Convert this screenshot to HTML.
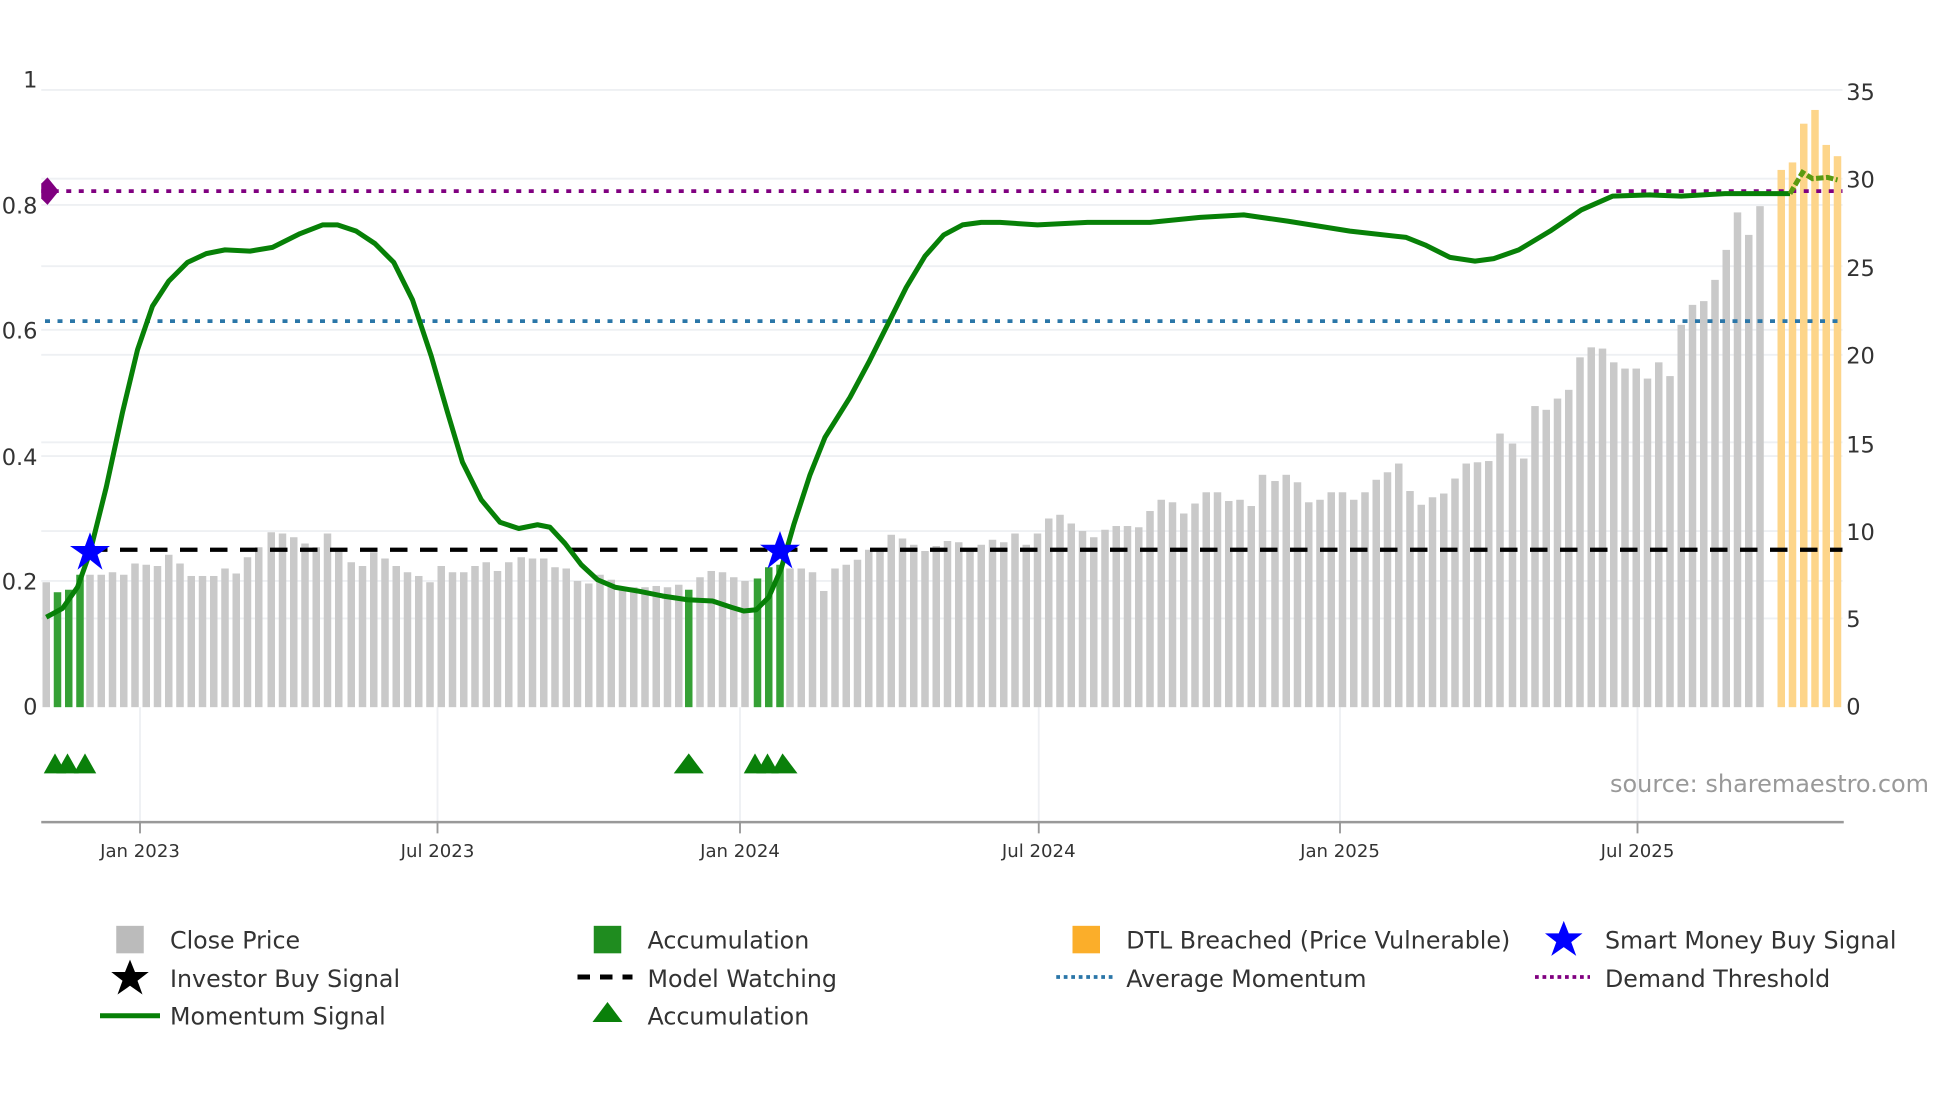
<!DOCTYPE html>
<html><head><meta charset="utf-8"><style>
html,body{margin:0;padding:0;background:#fff;width:1960px;height:1102px;overflow:hidden}
svg{display:block}
text{font-family:"DejaVu Sans","Liberation Sans",sans-serif}
</style></head><body>
<svg width="1960" height="1102" viewBox="0 0 1568 882" preserveAspectRatio="none" xmlns="http://www.w3.org/2000/svg">
<g stroke="#eef0f3" stroke-width="1.5">
<line x1="33" y1="72" x2="1474" y2="72"/><line x1="33" y1="143" x2="1474" y2="143"/><line x1="33" y1="213" x2="1474" y2="213"/><line x1="33" y1="284" x2="1474" y2="284"/><line x1="33" y1="354" x2="1474" y2="354"/><line x1="33" y1="425" x2="1474" y2="425"/><line x1="33" y1="495" x2="1474" y2="495"/>
<line x1="33" y1="164" x2="1474" y2="164"/><line x1="33" y1="264" x2="1474" y2="264"/><line x1="33" y1="365" x2="1474" y2="365"/><line x1="33" y1="465" x2="1474" y2="465"/>
<line x1="112" y1="566" x2="112" y2="658"/><line x1="350" y1="566" x2="350" y2="658"/><line x1="592" y1="566" x2="592" y2="658"/><line x1="831" y1="566" x2="831" y2="658"/><line x1="1072" y1="566" x2="1072" y2="658"/><line x1="1310" y1="566" x2="1310" y2="658"/>
</g>
<g fill="#c9c9c9">
<rect x="34" y="466" width="6" height="100"/>
<rect x="69" y="460" width="6" height="106"/><rect x="78" y="460" width="6" height="106"/><rect x="87" y="458" width="6" height="108"/><rect x="96" y="460" width="6" height="106"/><rect x="105" y="451" width="6" height="115"/><rect x="114" y="452" width="6" height="114"/><rect x="123" y="453" width="6" height="113"/><rect x="132" y="444" width="6" height="122"/><rect x="141" y="451" width="6" height="115"/><rect x="150" y="461" width="6" height="105"/><rect x="159" y="461" width="6" height="105"/><rect x="168" y="461" width="6" height="105"/><rect x="177" y="455" width="6" height="111"/><rect x="186" y="459" width="6" height="107"/><rect x="195" y="446" width="6" height="120"/><rect x="204" y="438" width="6" height="128"/><rect x="214" y="426" width="6" height="140"/><rect x="223" y="427" width="6" height="139"/><rect x="232" y="430" width="6" height="136"/><rect x="241" y="435" width="6" height="131"/><rect x="250" y="438" width="6" height="128"/><rect x="259" y="427" width="6" height="139"/><rect x="268" y="440" width="6" height="126"/><rect x="278" y="450" width="6" height="116"/><rect x="287" y="453" width="6" height="113"/><rect x="296" y="442" width="6" height="124"/><rect x="305" y="447" width="6" height="119"/><rect x="314" y="453" width="6" height="113"/><rect x="323" y="458" width="6" height="108"/><rect x="332" y="461" width="6" height="105"/><rect x="341" y="466" width="6" height="100"/><rect x="350" y="453" width="6" height="113"/><rect x="359" y="458" width="6" height="108"/><rect x="368" y="458" width="6" height="108"/><rect x="377" y="453" width="6" height="113"/><rect x="386" y="450" width="6" height="116"/><rect x="395" y="457" width="6" height="109"/><rect x="404" y="450" width="6" height="116"/><rect x="414" y="446" width="6" height="120"/><rect x="423" y="447" width="6" height="119"/><rect x="432" y="447" width="6" height="119"/><rect x="441" y="454" width="6" height="112"/><rect x="450" y="455" width="6" height="111"/><rect x="459" y="465" width="6" height="101"/><rect x="468" y="467" width="6" height="99"/><rect x="477" y="460" width="6" height="106"/><rect x="486" y="464" width="6" height="102"/><rect x="495" y="470" width="6" height="96"/><rect x="504" y="470" width="6" height="96"/><rect x="513" y="470" width="6" height="96"/><rect x="522" y="469" width="6" height="97"/><rect x="531" y="470" width="6" height="96"/><rect x="540" y="468" width="6" height="98"/>
<rect x="557" y="462" width="6" height="104"/><rect x="566" y="457" width="6" height="109"/><rect x="575" y="458" width="6" height="108"/><rect x="584" y="462" width="6" height="104"/><rect x="593" y="465" width="6" height="101"/>
<rect x="629" y="455" width="6" height="111"/><rect x="638" y="455" width="6" height="111"/><rect x="647" y="458" width="6" height="108"/><rect x="656" y="473" width="6" height="93"/><rect x="665" y="455" width="6" height="111"/><rect x="674" y="452" width="6" height="114"/><rect x="683" y="448" width="6" height="118"/><rect x="692" y="440" width="6" height="126"/><rect x="701" y="440" width="6" height="126"/><rect x="710" y="428" width="6" height="138"/><rect x="719" y="431" width="6" height="135"/><rect x="728" y="436" width="6" height="130"/><rect x="737" y="441" width="6" height="125"/><rect x="746" y="437" width="6" height="129"/><rect x="755" y="433" width="6" height="133"/><rect x="764" y="434" width="6" height="132"/><rect x="773" y="440" width="6" height="126"/><rect x="782" y="436" width="6" height="130"/><rect x="791" y="432" width="6" height="134"/><rect x="800" y="434" width="6" height="132"/><rect x="809" y="427" width="6" height="139"/><rect x="818" y="436" width="6" height="130"/><rect x="827" y="427" width="6" height="139"/><rect x="836" y="415" width="6" height="151"/><rect x="845" y="412" width="6" height="154"/><rect x="854" y="419" width="6" height="147"/><rect x="863" y="425" width="6" height="141"/><rect x="872" y="430" width="6" height="136"/><rect x="881" y="424" width="6" height="142"/><rect x="890" y="421" width="6" height="145"/><rect x="899" y="421" width="6" height="145"/><rect x="908" y="422" width="6" height="144"/><rect x="917" y="409" width="6" height="157"/><rect x="926" y="400" width="6" height="166"/><rect x="935" y="402" width="6" height="164"/><rect x="944" y="411" width="6" height="155"/><rect x="953" y="403" width="6" height="163"/><rect x="962" y="394" width="6" height="172"/><rect x="971" y="394" width="6" height="172"/><rect x="980" y="401" width="6" height="165"/><rect x="989" y="400" width="6" height="166"/><rect x="998" y="405" width="6" height="161"/><rect x="1007" y="380" width="6" height="186"/><rect x="1017" y="385" width="6" height="181"/><rect x="1026" y="380" width="6" height="186"/><rect x="1035" y="386" width="6" height="180"/><rect x="1044" y="402" width="6" height="164"/><rect x="1053" y="400" width="6" height="166"/><rect x="1062" y="394" width="6" height="172"/><rect x="1071" y="394" width="6" height="172"/><rect x="1080" y="400" width="6" height="166"/><rect x="1089" y="394" width="6" height="172"/><rect x="1098" y="384" width="6" height="182"/><rect x="1107" y="378" width="6" height="188"/><rect x="1116" y="371" width="6" height="195"/><rect x="1125" y="393" width="6" height="173"/><rect x="1134" y="404" width="6" height="162"/><rect x="1143" y="398" width="6" height="168"/><rect x="1152" y="395" width="6" height="171"/><rect x="1161" y="383" width="6" height="183"/><rect x="1170" y="371" width="6" height="195"/><rect x="1179" y="370" width="6" height="196"/><rect x="1188" y="369" width="6" height="197"/><rect x="1197" y="347" width="6" height="219"/><rect x="1207" y="355" width="6" height="211"/><rect x="1216" y="367" width="6" height="199"/><rect x="1225" y="325" width="6" height="241"/><rect x="1234" y="328" width="6" height="238"/><rect x="1243" y="319" width="6" height="247"/><rect x="1252" y="312" width="6" height="254"/><rect x="1261" y="286" width="6" height="280"/><rect x="1270" y="278" width="6" height="288"/><rect x="1279" y="279" width="6" height="287"/><rect x="1288" y="290" width="6" height="276"/><rect x="1297" y="295" width="6" height="271"/><rect x="1306" y="295" width="6" height="271"/><rect x="1315" y="303" width="6" height="263"/><rect x="1324" y="290" width="6" height="276"/><rect x="1333" y="301" width="6" height="265"/><rect x="1342" y="260" width="6" height="306"/><rect x="1351" y="244" width="6" height="322"/><rect x="1360" y="241" width="6" height="325"/><rect x="1369" y="224" width="6" height="342"/><rect x="1378" y="200" width="6" height="366"/><rect x="1387" y="170" width="6" height="396"/><rect x="1396" y="188" width="6" height="378"/><rect x="1405" y="165" width="6" height="401"/>
</g>
<g fill="#fdd58a">
<rect x="1422" y="136" width="6" height="430"/><rect x="1431" y="130" width="6" height="436"/><rect x="1440" y="99" width="6" height="467"/><rect x="1449" y="88" width="6" height="478"/><rect x="1458" y="116" width="6" height="450"/><rect x="1467" y="125" width="6" height="441"/>
</g>
<g fill="#35a035">
<rect x="43" y="474" width="6" height="92"/><rect x="52" y="472" width="6" height="94"/><rect x="61" y="460" width="6" height="106"/><rect x="548" y="472" width="6" height="94"/><rect x="603" y="463" width="6" height="103"/><rect x="612" y="454" width="6" height="112"/><rect x="621" y="452" width="6" height="114"/>
</g>
<line x1="33" y1="153" x2="1474" y2="153" stroke="#800080" stroke-width="3" stroke-dasharray="4,6"/>
<polygon points="33,147 38,142 47,153 38,164 33,159" fill="#800080"/>
<line x1="36" y1="257" x2="1474" y2="257" stroke="#2a76a8" stroke-width="3" stroke-dasharray="4,6"/>
<line x1="72" y1="440" x2="1474" y2="440" stroke="#000" stroke-width="3.5" stroke-dasharray="14,10"/>
<path d="M37,494 L50,487 L62,470 L72,442 L85,390 L98,330 L110,280 L122,245 L135,225 L150,210 L165,203 L180,200 L200,201 L218,198 L240,187 L258,180 L270,180 L285,185 L300,195 L315,210 L330,240 L345,285 L358,330 L370,370 L385,400 L400,418 L415,423 L430,420 L440,422 L452,435 L465,452 L478,464 L492,470 L510,473 L530,477 L550,480 L570,481 L585,486 L595,489 L605,488 L615,478 L625,455 L635,420 L648,380 L660,350 L680,318 L695,290 L710,260 L725,230 L740,205 L755,188 L770,180 L785,178 L800,178 L830,180 L870,178 L920,178 L960,174 L995,172 L1030,177 L1080,185 L1125,190 L1140,196 L1160,206 L1180,209 L1195,207 L1215,200 L1240,185 L1265,168 L1290,157 L1320,156 L1345,157 L1380,155 L1432,155" fill="none" stroke="#078007" stroke-width="4" stroke-linejoin="round"/>
<path d="M1432,155 L1442,138 L1450,143 L1462,142 L1470,144" fill="none" stroke="#5a9a10" stroke-width="4" stroke-dasharray="6,2"/>
<g fill="#0000ff">
<polygon points="72,426 76,437 88,437 78,444 82,456 72,448 62,456 66,444 56,437 68,437"/>
<polygon points="624,425 628,436 640,436 630,443 634,455 624,447 614,455 618,443 608,436 620,436"/>
</g>
<g fill="#0a800a">
<polygon points="35,619 44,603 53,619"/><polygon points="45,619 54,603 63,619"/><polygon points="59,619 68,603 77,619"/>
<polygon points="539,619 551,603 563,619"/>
<polygon points="595,619 604,603 613,619"/><polygon points="605,619 614,603 623,619"/><polygon points="617,619 626,603 638,619"/>
</g>
<line x1="33" y1="658" x2="1475" y2="658" stroke="#999" stroke-width="2"/>
<g stroke="#999" stroke-width="1.5">
<line x1="112" y1="658" x2="112" y2="667"/><line x1="350" y1="658" x2="350" y2="667"/><line x1="592" y1="658" x2="592" y2="667"/><line x1="831" y1="658" x2="831" y2="667"/><line x1="1072" y1="658" x2="1072" y2="667"/><line x1="1310" y1="658" x2="1310" y2="667"/>
</g>
<g fill="#333" font-size="14.5" text-anchor="middle">
<text x="112" y="686">Jan 2023</text><text x="350" y="686">Jul 2023</text><text x="592" y="686">Jan 2024</text><text x="831" y="686">Jul 2024</text><text x="1072" y="686">Jan 2025</text><text x="1310" y="686">Jul 2025</text>
</g>
<g fill="#333" font-size="18" text-anchor="end">
<text x="30" y="70">1</text><text x="30" y="171">0.8</text><text x="30" y="271">0.6</text><text x="30" y="372">0.4</text><text x="30" y="472">0.2</text><text x="30" y="572">0</text>
</g>
<g fill="#333" font-size="18">
<text x="1477" y="80">35</text><text x="1477" y="150">30</text><text x="1477" y="221">25</text><text x="1477" y="291">20</text><text x="1477" y="362">15</text><text x="1477" y="432">10</text><text x="1477" y="502">5</text><text x="1477" y="572">0</text>
</g>
<text x="1288" y="634" fill="#999" font-size="19.2">source: sharemaestro.com</text>
<g fill="#333" font-size="19">
<text x="136" y="759">Close Price</text><text x="518" y="759">Accumulation</text><text x="901" y="759">DTL Breached (Price Vulnerable)</text><text x="1284" y="759">Smart Money Buy Signal</text>
<text x="136" y="790">Investor Buy Signal</text><text x="518" y="790">Model Watching</text><text x="901" y="790">Average Momentum</text><text x="1284" y="790">Demand Threshold</text>
<text x="136" y="820">Momentum Signal</text><text x="518" y="820">Accumulation</text>
</g>
<rect x="93" y="741" width="22" height="22" fill="#bbb"/>
<rect x="475" y="741" width="22" height="22" fill="#1f8c1f"/>
<rect x="858" y="741" width="22" height="22" fill="#fbae2a"/>
<polygon points="1251,737 1255,747 1266,747 1257,754 1261,765 1251,758 1241,765 1245,754 1236,747 1247,747" fill="#0000ff"/>
<polygon points="104,768 108,778 119,778 110,785 114,796 104,789 94,796 98,785 89,778 100,778" fill="#000"/>
<line x1="462" y1="782" x2="506" y2="782" stroke="#000" stroke-width="4" stroke-dasharray="10,8"/>
<line x1="845" y1="782" x2="890" y2="782" stroke="#2a76a8" stroke-width="3" stroke-dasharray="3,3"/>
<line x1="1228" y1="782" x2="1272" y2="782" stroke="#800080" stroke-width="3" stroke-dasharray="3,3"/>
<line x1="80" y1="813" x2="128" y2="813" stroke="#078007" stroke-width="4"/>
<polygon points="474,818 486,802 498,818" fill="#0a800a"/>
</svg>
</body></html>
